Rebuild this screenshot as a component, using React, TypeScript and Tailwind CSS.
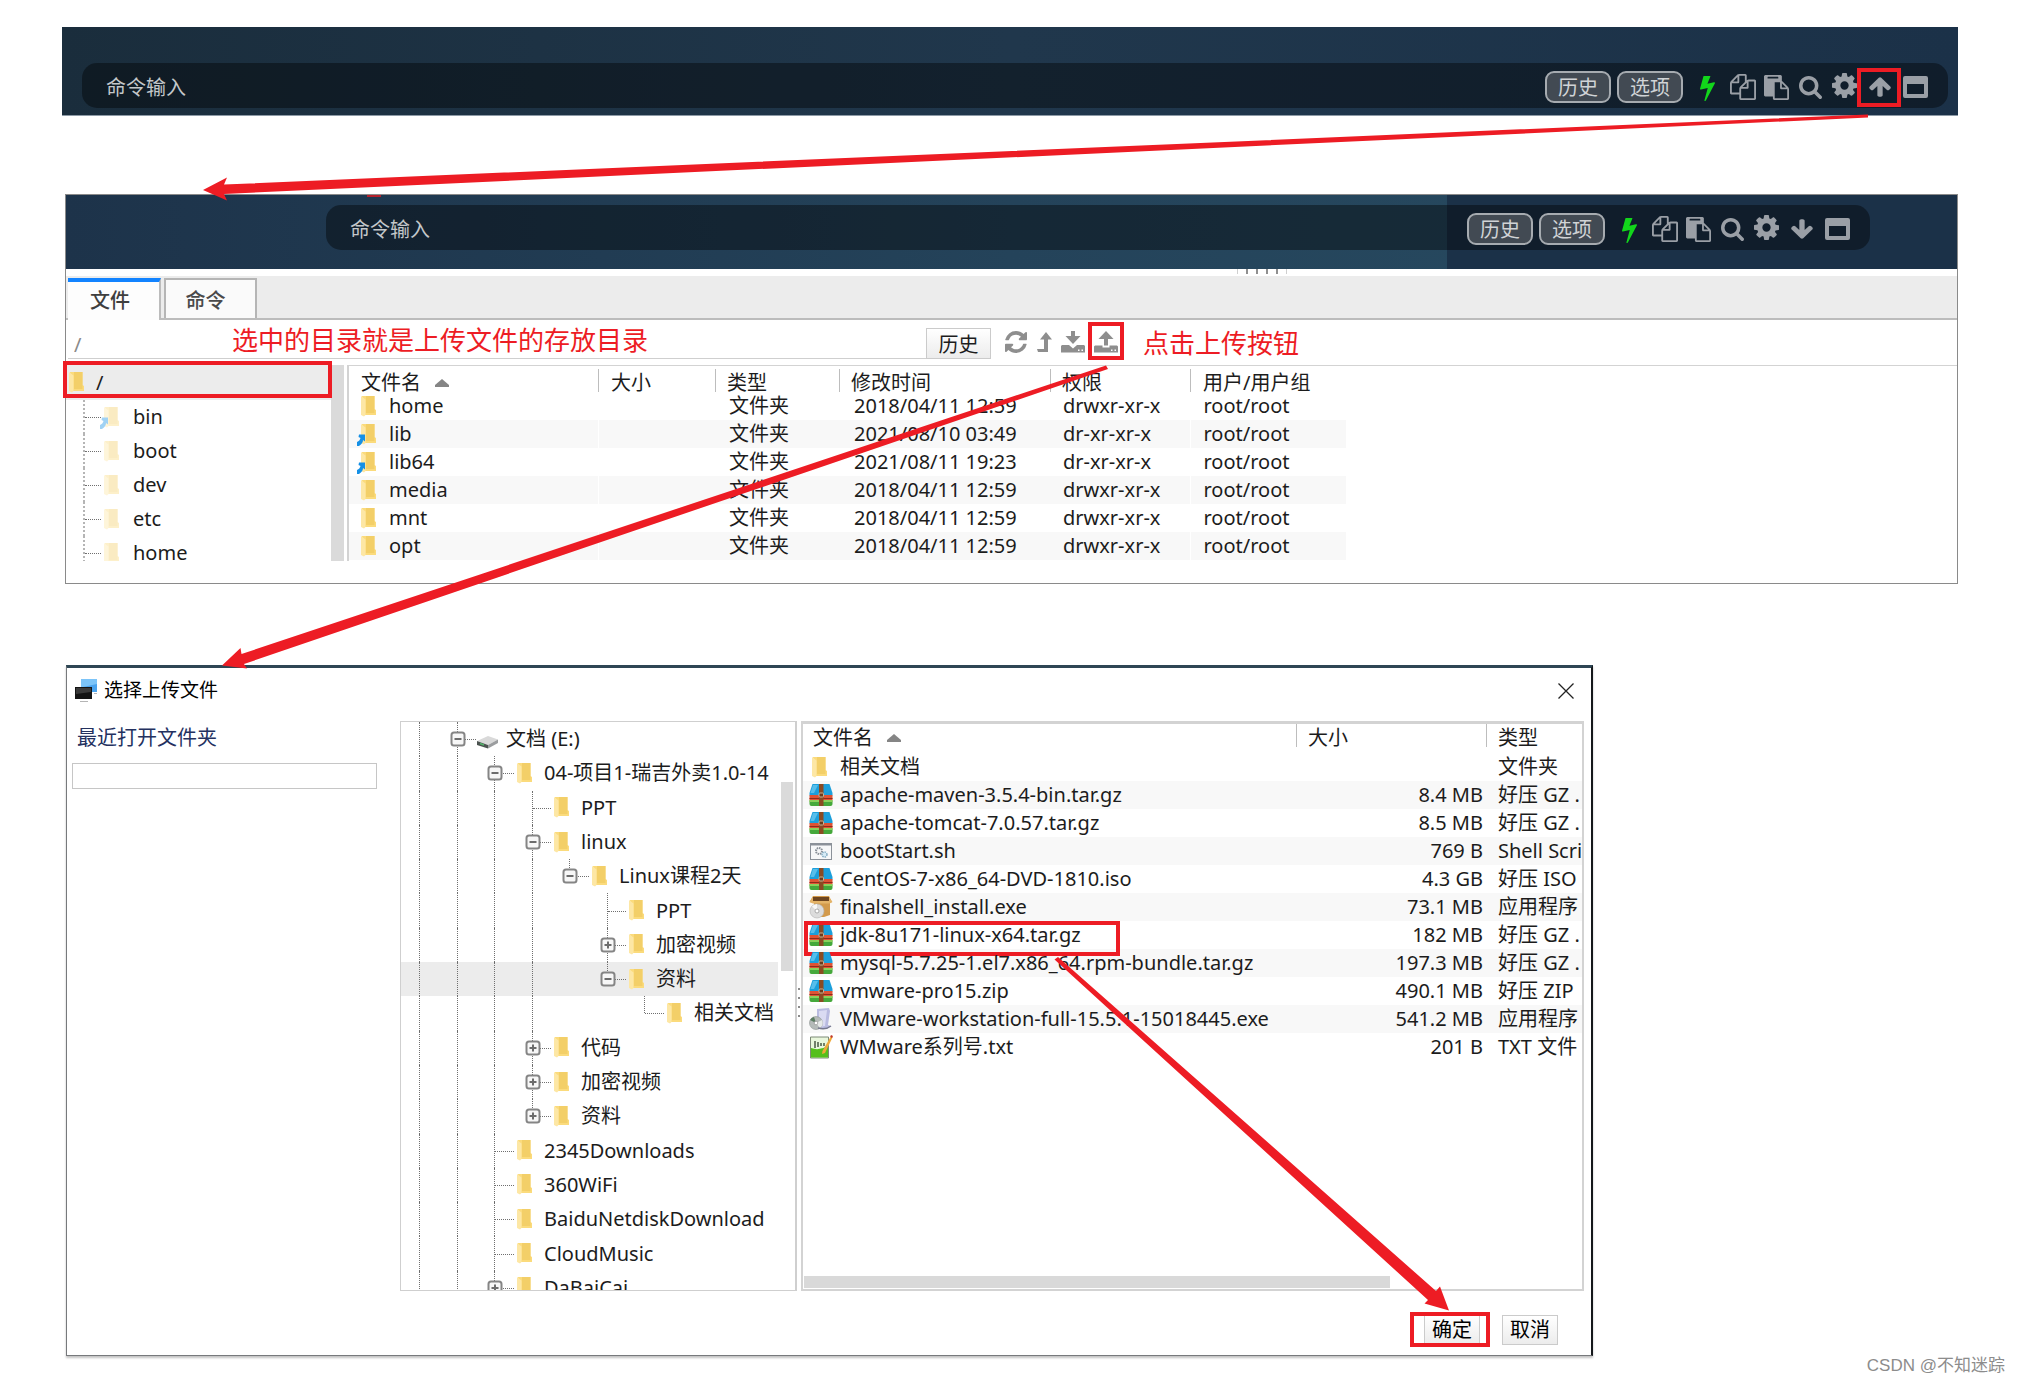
import React from "react";

const FILES_PATH =
  "M1696 384q40 0 68 28t28 68v1216q0 40-28 68t-68 28h-960q-40 0-68-28t-28-68v-288h-544q-40 0-68-28t-28-68v-672q0-40 20-88t48-76l408-408q28-28 76-48t88-20h416q40 0 68 28t28 68v328q68-40 128-40h416zm-544 213l-299 299h299v-299zm-640-384l-299 299h299v-299zm196 647l316-316v-416h-384v416q0 40-28 68t-68 28h-416v640h512v-256q0-40 20-88t48-76zm956 804v-1152h-384v416q0 40-28 68t-68 28h-416v640h896z";
const PASTE_PATH =
  "M768 1664h896v-640h-416q-40 0-68-28t-28-68v-416h-384v1152zm256-1440v-64q0-13-9.5-22.5t-22.5-9.5h-704q-13 0-22.5 9.5t-9.5 22.5v64q0 13 9.5 22.5t22.5 9.5h704q13 0 22.5-9.5t9.5-22.5zm256 672h299l-299-299v299zm512 128v672q0 40-28 68t-68 28h-960q-40 0-68-28t-28-68v-160h-544q-40 0-68-28t-28-68v-1344q0-40 28-68t68-28h1088q40 0 68 28t28 68v328q21 13 36 28l408 408q28 28 48 76t20 88z";
const SEARCH_PATH =
  "M1216 832q0-185-131.5-316.5t-316.5-131.5-316.5 131.5-131.5 316.5 131.5 316.5 316.5 131.5 316.5-131.5 131.5-316.5zm512 832q0 52-38 90t-90 38q-54 0-90-38l-343-342q-179 124-399 124-143 0-273.5-55.5t-225-150-150-225-55.5-273.5 55.5-273.5 150-225 225-150 273.5-55.5 273.5 55.5 225 150 150 225 55.5 273.5q0 220-124 399l343 343q37 37 37 90z";
const COG_PATH =
  "M1152 896q0-106-75-181t-181-75-181 75-75 181 75 181 181 75 181-75 75-181zm512-109v222q0 12-8 23t-20 13l-185 28q-19 54-39 91 35 50 107 138 10 12 10 25t-9 23q-27 37-99 108t-94 71q-12 0-26-9l-138-108q-44 23-91 38-16 136-29 186-7 28-36 28h-222q-14 0-24.5-8.5t-11.5-21.5l-28-184q-49-16-90-37l-141 107q-10 9-25 9-14 0-25-11-126-114-165-168-7-10-7-23 0-12 8-23 15-21 51-66.5t54-70.5q-27-50-41-99l-183-27q-13-2-21-12.5t-8-23.5v-222q0-12 8-23t19-13l186-28q14-46 39-92-40-57-107-138-10-12-10-24 0-10 9-23 26-36 98.5-107.5t94.5-71.5q13 0 26 10l138 107q44-23 91-38 16-136 29-186 7-28 36-28h222q14 0 24.5 8.5t11.5 21.5l28 184q49 16 90 37l142-107q9-9 24-9 13 0 25 10 129 119 165 170 7 8 7 22 0 12-8 23-15 21-51 66.5t-54 70.5q26 50 41 98l183 28q13 2 21 12.5t8 23.5z";
const UP_PATH =
  "M1675 971q0 51-37 90l-75 75q-38 38-91 38-54 0-90-38l-294-293v704q0 52-37.5 84.5t-90.5 32.5h-128q-53 0-90.5-32.5t-37.5-84.5v-704l-294 293q-36 38-90 38t-90-38l-75-75q-38-38-38-90 0-53 38-91l651-651q35-37 90-37 54 0 91 37l651 651q37 39 37 91z";
const BOLT_PATH =
  "M1333 566q18 20 7 44l-540 1157q-13 25-42 25-4 0-14-2-17-5-25.5-19t-4.5-30l197-808-406 101q-4 1-12 1-18 0-31-11-18-15-13-39l201-825q4-14 16-23t28-9h328q19 0 32 12.5t13 29.5q0 8-5 18l-171 463 396-98q8-2 12-2 19 0 34 15z";
const REFRESH_PATH =
  "M1639 1056q0 5-1 7-64 268-268 434.5t-478 166.5q-146 0-282.5-55t-243.5-157l-129 129q-19 19-45 19t-45-19-19-45v-448q0-26 19-45t45-19h448q26 0 45 19t19 45-19 45l-137 137q71 66 161 102t187 36q134 0 250-65t186-179q11-17 53-117 8-23 30-23h192q13 0 22.5 9.5t9.5 22.5zm25-800v448q0 26-19 45t-45 19h-448q-26 0-45-19t-19-45 19-45l138-138q-148-137-349-137-134 0-250 65t-186 179q-11 17-53 117-8 23-30 23h-199q-13 0-22.5-9.5t-9.5-22.5v-7q65-268 270-434.5t480-166.5q146 0 284 55.5t245 156.5l130-129q19-19 45-19t45 19 19 45z";

function Glyph({ d, className, box = "0 0 1792 1792" }: { d: string; className: string; box?: string }) {
  return (
    <svg viewBox={box} className={className} fill="currentColor" preserveAspectRatio="none" aria-hidden="true">
      <path d={d} />
    </svg>
  );
}

function PillButton({ children }: { children: React.ReactNode }) {
  return (
    <button className="flex h-8 w-[66px] items-center justify-center rounded-[9px] border-2 border-[#a6abb0] bg-[#424a53] pt-[2px] text-[20px] leading-none text-[#d0d3d6]">
      {children}
    </button>
  );
}

function CommandBar({ id, dir }: { id: string; dir: "up" | "down" }) {
  return (
    <div className="flex h-[45px] items-center rounded-[15px] bg-black/40 pl-6 pr-5 pt-[3px]">
      <input
        id={id}
        aria-label="命令输入"
        placeholder="命令输入"
        className="min-w-0 flex-1 bg-transparent text-[20px] leading-none outline-none placeholder:text-[#c3c7ca] placeholder:opacity-100"
      />
      <div className="flex shrink-0 items-center text-[#9a9fa6]">
        <div className="flex gap-[6px]">
          <PillButton>历史</PillButton>
          <PillButton>选项</PillButton>
        </div>
        <button aria-label="快速连接" className="ml-[17px] text-[#12d61b]">
          <Glyph d={BOLT_PATH} box="448 0 896 1792" className="h-[27px] w-[15px]" />
        </button>
        <button aria-label="复制" className="ml-[15px]">
          <Glyph d={FILES_PATH} className="size-[26px]" />
        </button>
        <button aria-label="粘贴" className="ml-2">
          <Glyph d={PASTE_PATH} className="size-[25px]" />
        </button>
        <button aria-label="搜索" className="ml-[10px]">
          <Glyph d={SEARCH_PATH} box="64 128 1664 1664" className="size-[23px]" />
        </button>
        <button aria-label="设置" className="ml-[10px] mb-[3px]">
          <Glyph d={COG_PATH} box="128 128 1536 1536" className="size-[25px]" />
        </button>
        <button aria-label={dir === "up" ? "展开" : "收起"} className="relative ml-3">
          <Glyph
            d={UP_PATH}
            box="100 170 1590 1510"
            className={dir === "up" ? "h-5 w-[22px]" : "h-5 w-[22px] rotate-180"}
          />
          {dir === "up" && (
            <span className="absolute -left-[12px] -top-[9px] h-[39px] w-[44px] border-4 border-[#ed1c24]" />
          )}
        </button>
        <button aria-label="窗口" className="ml-3">
          <svg viewBox="0 0 25 22" className="h-[22px] w-[25px]" aria-hidden="true">
            <path
              fill="currentColor"
              fillRule="evenodd"
              d="M2 0h21a2 2 0 0 1 2 2v18a2 2 0 0 1-2 2H2a2 2 0 0 1-2-2V2a2 2 0 0 1 2-2zM4 8v10h17V8z"
            />
          </svg>
        </button>
      </div>
    </div>
  );
}

function Folder({ link = false, faded = false }: { link?: boolean; faded?: boolean }) {
  return (
    <svg viewBox="-3 0 19 23" className="h-[23px] w-[19px] shrink-0 overflow-visible" aria-hidden="true">
      <g opacity={faded ? 0.4 : 1}>
        <path d="M1 1h12.500v13l1.500 1v5H3z" fill="#fbdb7c" />
        <path d="M5 1h8.500v17H5z" fill="#f3cf68" />
        <path d="M0 1l4.500 3.500V20L3 21.500 0 20z" fill="#fde7a5" />
        {link && <path d="M-2 11.500h6v7l-2-1.500c0 2-1 4-4 6h-2v-4c2-1 3-2 3.500-4L-2.500 14z" fill="#1590e6" />}
      </g>
    </svg>
  );
}

function Drive() {
  return (
    <svg viewBox="0 0 24 20" className="h-5 w-6 shrink-0" aria-hidden="true">
      <path d="M1 12L12 7l10 3.500-10 5.500z" fill="#d9d9d9" />
      <path d="M1 12l11 4v3.500L1 16z" fill="#4c5350" />
      <path d="M12 16l10-5.500V14l-10 5.500z" fill="#9b9d9f" />
      <path d="M4 14.500l4 1.500" stroke="#52b36a" strokeWidth="1.500" />
    </svg>
  );
}

function Archive() {
  return (
    <svg viewBox="0 0 24 24" className="h-6 w-6 shrink-0" aria-hidden="true">
      <path d="M3.500 1h17L23.500 10v2.500H.5V10z" fill="#1c9fdb" />
      <path d="M4 2h5L5 10H1.500z" fill="#7fd3f5" opacity=".6" />
      <path d="M.5 12h23v5.500H.5z" fill="#df5334" />
      <path d="M.5 15h23v1H.5z" fill="#8d2c1c" />
      <path d="M.5 17.500h23V21q0 2-2 2h-19q-2 0-2-2z" fill="#45a83b" />
      <path d="M.5 17h23v2H.5z" fill="#8ad05b" />
      <path d="M10 1h4.500v22H10z" fill="#8a4b23" />
      <rect x="10" y="10" width="4.500" height="4" rx="1" fill="#6b3a1c" stroke="#c9b595" strokeWidth="1" />
    </svg>
  );
}

function Script() {
  return (
    <svg viewBox="0 0 24 24" className="h-6 w-6 shrink-0" aria-hidden="true">
      <rect x="1.500" y="4.500" width="21" height="16" fill="#f7f8f9" stroke="#8b9199" />
      <path d="M1 4h22v2.500H1z" fill="#8b9199" />
      <circle cx="10" cy="12" r="3" fill="none" stroke="#8a9199" strokeWidth="2" strokeDasharray="1.500 .8" />
      <circle cx="15.500" cy="15.500" r="2.500" fill="#d7ecf7" stroke="#86aec4" strokeWidth="1.500" strokeDasharray="1.500 .8" />
    </svg>
  );
}

function BoxDisc() {
  return (
    <svg viewBox="0 0 24 24" className="h-6 w-6 shrink-0" aria-hidden="true">
      <path d="M4 1h16l3 6-2 1v12l-6 2H5V8L.5 7z" fill="#d39a4b" />
      <path d="M4 2h16v4H4z" fill="#6d4520" />
      <path d="M.5 7L4 2v4h16V2l3.500 5-3 1.500H4z" fill="#e4b469" />
      <circle cx="8" cy="16" r="7" fill="#dcdcdc" stroke="#b2b2b2" strokeWidth=".6" />
      <path d="M8 16L3 11.500A7 7 0 0 1 8 9z" fill="#f8f8f8" />
      <circle cx="8" cy="16" r="2" fill="#fff" stroke="#999" strokeWidth=".8" />
    </svg>
  );
}

function Installer() {
  return (
    <svg viewBox="0 0 24 24" className="h-6 w-6 shrink-0" aria-hidden="true">
      <path d="M8 2l12-1 1 3-2 14 3 1-4 3H8z" fill="#b9bbe0" />
      <path d="M10 4l8-1-2 16-6 1z" fill="#dadbf2" />
      <circle cx="7" cy="16" r="6.500" fill="#b5bbb9" stroke="#8c9290" strokeWidth=".6" />
      <path d="M7 16L1 13a6.500 6.500 0 0 1 4-3z" fill="#5c7d62" />
      <path d="M7 16l6-3a6.500 6.500 0 0 1-2 8z" fill="#e6e9e8" />
      <circle cx="7" cy="16" r="1.800" fill="#fff" stroke="#888" strokeWidth=".6" />
      <path d="M9 21q8 2 13-2" stroke="#77798f" strokeWidth="1.500" fill="none" />
    </svg>
  );
}

function TextDoc() {
  return (
    <svg viewBox="0 0 24 24" className="h-6 w-6 shrink-0" aria-hidden="true">
      <path d="M1.500 2h18v21h-18z" fill="#e9f7dc" stroke="#7d8a76" />
      <path d="M2 13q8 3 17-2v11.500H2z" fill="#55bf1c" />
      <path d="M6 6v7M9 7v5M12 8v3M15 8v3" stroke="#4a5a44" strokeWidth="1.500" />
      <path d="M22 1l1.500 1.500L16 18l-3 1 .5-3z" fill="#f0a93a" />
      <path d="M21 1l2-1 1 2-1.500 1z" fill="#c0392b" />
    </svg>
  );
}

function SortMark() {
  return (
    <svg viewBox="0 0 14 8" className="h-2 w-[14px]" aria-hidden="true">
      <path d="M7 0l7 6v2H0V6z" fill="#858585" />
    </svg>
  );
}

function HeadCell({ label, first = false, sorted = false, pad }: { label: string; first?: boolean; sorted?: boolean; pad: string }) {
  return (
    <th scope="col" className="p-0 text-left font-normal">
      <div className={`flex h-[23px] items-center gap-[14px] whitespace-nowrap leading-none ${pad} ${first ? "" : "border-l border-[#bdbdbd]"}`}>
        {label}
        {sorted && <SortMark />}
      </div>
    </th>
  );
}

const REMOTE = [
  { name: "home", link: false, date: "2018/04/11 12:59", perm: "drwxr-xr-x" },
  { name: "lib", link: true, date: "2021/08/10 03:49", perm: "dr-xr-xr-x" },
  { name: "lib64", link: true, date: "2021/08/11 19:23", perm: "dr-xr-xr-x" },
  { name: "media", link: false, date: "2018/04/11 12:59", perm: "drwxr-xr-x" },
  { name: "mnt", link: false, date: "2018/04/11 12:59", perm: "drwxr-xr-x" },
  { name: "opt", link: false, date: "2018/04/11 12:59", perm: "drwxr-xr-x" },
];

function RemoteTable() {
  return (
    <table className="w-[997px] table-fixed border-collapse">
      <colgroup>
        <col className="w-[249px]" />
        <col className="w-[117px]" />
        <col className="w-[124px]" />
        <col className="w-[211px]" />
        <col className="w-[140px]" />
        <col className="w-[156px]" />
      </colgroup>
      <thead>
        <tr className="h-[26px] align-bottom">
          <HeadCell label="文件名" first sorted pad="pl-3 pt-1" />
          <HeadCell label="大小" pad="pl-3 pt-1" />
          <HeadCell label="类型" pad="pl-[11px] pt-1" />
          <HeadCell label="修改时间" pad="pl-[11px] pt-1" />
          <HeadCell label="权限" pad="pl-[11px] pt-1" />
          <HeadCell label="用户/用户组" pad="pl-3 pt-1" />
        </tr>
      </thead>
      <tbody>
        {REMOTE.map((r) => (
          <tr key={r.name} className="h-7 even:bg-[#f8f8f8]">
            <td className="p-0">
              <div className="flex items-center gap-2 pl-[9px]">
                <Folder link={r.link} />
                <span className="pl-1 leading-7">{r.name}</span>
              </div>
            </td>
            <td className="border-l border-white p-0" />
            <td className="p-0 pl-[14px] leading-7">文件夹</td>
            <td className="p-0 pl-[15px] leading-7">{r.date}</td>
            <td className="p-0 pl-[13px] leading-7">{r.perm}</td>
            <td className="border-l border-white p-0 pl-[13px] leading-7">root/root</td>
          </tr>
        ))}
      </tbody>
    </table>
  );
}

type Guide = "|" | " " | "T" | "L";
type Node = { label: string; cells: string; sign?: "+" | "-"; drive?: boolean; selected?: boolean };

const TREE: Node[] = [
  { label: "文档 (E:)", cells: "|T", sign: "-", drive: true },
  { label: "04-项目1-瑞吉外卖1.0-14", cells: "||T", sign: "-" },
  { label: "PPT", cells: "|||T" },
  { label: "linux", cells: "|||T", sign: "-" },
  { label: "Linux课程2天", cells: "||||L", sign: "-" },
  { label: "PPT", cells: "|||| T" },
  { label: "加密视频", cells: "|||| T", sign: "+" },
  { label: "资料", cells: "|||| L", sign: "-", selected: true },
  { label: "相关文档", cells: "||||  L" },
  { label: "代码", cells: "|||T", sign: "+" },
  { label: "加密视频", cells: "|||T", sign: "+" },
  { label: "资料", cells: "|||L", sign: "+" },
  { label: "2345Downloads", cells: "||T" },
  { label: "360WiFi", cells: "||T" },
  { label: "BaiduNetdiskDownload", cells: "||T" },
  { label: "CloudMusic", cells: "||T" },
  { label: "DaBaiCai", cells: "||T", sign: "+" },
];

function GuideCell({ kind, sign, wide, last }: { kind: Guide; sign?: "+" | "-"; wide: boolean; last: boolean }) {
  return (
    <div className={`relative h-full shrink-0 ${wide ? "w-[38px]" : "w-[37px]"}`}>
      {kind !== " " && (
        <span className={`absolute left-[18px] top-0 border-l border-dotted border-[#6f6f6f] ${kind === "L" ? "h-1/2" : "h-full"}`} />
      )}
      {last && <span className="absolute left-[19px] right-0 top-1/2 border-t border-dotted border-[#6f6f6f]" />}
      {last && sign && (
        <svg viewBox="0 0 16 16" className="absolute left-[11px] top-[9px] size-4" aria-hidden="true">
          <rect x="1.500" y="1.500" width="13" height="13" rx="2.500" fill="#f7f7f7" stroke="#858585" strokeWidth="2" />
          <path d={sign === "+" ? "M4.500 8h7M8 4.500v7" : "M4.500 8h7"} stroke="#6c6c6c" strokeWidth="2" />
        </svg>
      )}
    </div>
  );
}

function LocalTree() {
  return (
    <ul className="grid h-[583px] auto-rows-fr">
      {TREE.map((n, i) => (
        <li key={i} className={`mr-[17px] flex min-h-0 items-center ${n.selected ? "bg-[#ececec]" : ""}`}>
          {n.cells.split("").map((c, k) => (
            <GuideCell key={k} kind={c as Guide} sign={n.sign} wide={k % 2 === 0} last={k === n.cells.length - 1} />
          ))}
          {n.drive ? <Drive /> : <Folder />}
          <span className={`whitespace-nowrap leading-none ${n.drive ? "pl-[6px]" : "pl-[11px]"}`}>{n.label}</span>
        </li>
      ))}
    </ul>
  );
}

const LOCAL = [
  { icon: <Folder />, name: "相关文档", size: "", type: "文件夹" },
  { icon: <Archive />, name: "apache-maven-3.5.4-bin.tar.gz", size: "8.4 MB", type: "好压 GZ ." },
  { icon: <Archive />, name: "apache-tomcat-7.0.57.tar.gz", size: "8.5 MB", type: "好压 GZ ." },
  { icon: <Script />, name: "bootStart.sh", size: "769 B", type: "Shell Scri" },
  { icon: <Archive />, name: "CentOS-7-x86_64-DVD-1810.iso", size: "4.3 GB", type: "好压 ISO" },
  { icon: <BoxDisc />, name: "finalshell_install.exe", size: "73.1 MB", type: "应用程序" },
  { icon: <Archive />, name: "jdk-8u171-linux-x64.tar.gz", size: "182 MB", type: "好压 GZ .", marked: true },
  { icon: <Archive />, name: "mysql-5.7.25-1.el7.x86_64.rpm-bundle.tar.gz", size: "197.3 MB", type: "好压 GZ ." },
  { icon: <Archive />, name: "vmware-pro15.zip", size: "490.1 MB", type: "好压 ZIP" },
  { icon: <Installer />, name: "VMware-workstation-full-15.5.1-15018445.exe", size: "541.2 MB", type: "应用程序" },
  { icon: <TextDoc />, name: "WMware系列号.txt", size: "201 B", type: "TXT 文件" },
];

function LocalTable() {
  return (
    <table className="w-full table-fixed border-collapse">
      <colgroup>
        <col />
        <col className="w-[190px]" />
        <col className="w-[96px]" />
      </colgroup>
      <thead>
        <tr className="h-[29px] align-top">
          <HeadCell label="文件名" first sorted pad="pl-[10px] pt-1" />
          <HeadCell label="大小" pad="pl-[11px] pt-1" />
          <HeadCell label="类型" pad="pl-[11px] pt-1" />
        </tr>
      </thead>
      <tbody>
        {LOCAL.map((r) => (
          <tr key={r.name} className="h-7 even:bg-[#f8f8f8]">
            <td className="relative p-0">
              <div className="flex items-center pl-[6px]">
                <span className="flex w-[31px] shrink-0">{r.icon}</span>
                <span className="whitespace-nowrap leading-7">{r.name}</span>
              </div>
              {r.marked && (
                <span className="absolute left-px top-0 h-[35px] w-[316px] border-4 border-[#ed1c24]" />
              )}
            </td>
            <td className="p-0 pr-[3px] text-right leading-7">{r.size}</td>
            <td className="whitespace-nowrap p-0 pl-3 leading-7">{r.type}</td>
          </tr>
        ))}
      </tbody>
    </table>
  );
}

function Arrows() {
  return (
    <svg className="pointer-events-none absolute left-0 top-0 h-[1383px] w-[2021px]" viewBox="0 0 2021 1383" aria-hidden="true">
      <g fill="#ed1c24">
        <path d="M203 190L227 177.500 224 184.500 1868 114.500V117.500L224 194 227 200.500z" />
        <path d="M222 665.500L240.500 648 241.500 654 1106 365.500 1108 369 244 664 247 668.500z" />
        <path d="M1054.500 959.500L1058 957 1436 1291 1440 1286.500 1449 1310.500 1424.500 1303.500 1428 1300z" />
      </g>
    </svg>
  );
}

export default function App() {
  return (
    <div className="relative overflow-hidden bg-white pb-7 font-['Noto_Sans','Noto_Sans_CJK_SC',sans-serif] text-[20px] text-[#1c1c1c]">
      <header className="ml-[62px] mr-[63px] mt-[27px] border-b border-[#8d9aa6] bg-linear-to-r from-[#1a2d3c] via-[#20374c] to-[#1b3148] pb-[7px] pl-5 pr-[10px] pt-9">
        <CommandBar id="cmd-top" dir="up" />
      </header>

      <main>
        <section className="ml-[65px] mr-[63px] mt-[78px] border border-[#8a8a8a]">
          <div className="relative flex bg-linear-to-r from-[#1d334a] via-[#24435a] to-[#284c62] pb-[19px] pl-[260px] pr-[87px] pt-[10px]">
            <span className="absolute inset-y-0 right-0 w-[510px] bg-[#1b3148]" />
            <span className="absolute left-[301px] top-0 h-[2px] w-[14px] bg-[#b3202c]" />
            <div className="relative flex-1">
              <CommandBar id="cmd-panel" dir="down" />
            </div>
          </div>
          <div className="flex h-[7px] items-center justify-center gap-2 pl-[500px] pb-[2px]">
            <span className="h-[5px] w-px bg-[#cfcfcf]" />
            <span className="h-[5px] w-[2px] bg-[#8f8f8f]" />
            <span className="h-[5px] w-[2px] bg-[#8f8f8f]" />
            <span className="h-[5px] w-[2px] bg-[#8f8f8f]" />
            <span className="h-[5px] w-[2px] bg-[#8f8f8f]" />
            <span className="h-[5px] w-px bg-[#cfcfcf]" />
          </div>
          <div role="tablist" className="flex h-11 items-end gap-[3px] border-b-2 border-[#bcbcbc] bg-[#ececec] pl-[2px]">
            <button role="tab" aria-selected="true" className="-mb-[2px] h-[42px] w-[93px] border-r-2 border-t-4 border-r-[#bcbcbc] border-t-[#1283ff] bg-[#fdfdfd] pr-[7px] text-[20px] font-medium leading-none text-[#3f3f3f]">
              文件
            </button>
            <button role="tab" aria-selected="false" className="h-10 w-[93px] border-2 border-b-0 border-[#b5b5b5] bg-[#fafafa] pr-[10px] pt-1 text-[20px] font-medium leading-none text-[#4a4a4a]">
              命令
            </button>
          </div>

          <div className="relative flex h-[45px] items-start pl-[2px] pt-2">
            <input
              aria-label="路径"
              defaultValue="/"
              className="h-[31px] w-[858px] border-b border-[#cfcfcf] bg-transparent pl-[6px] pt-[2px] text-[20px] leading-none text-[#8a8a8a] outline-none"
            />
            <button className="h-[31px] w-[65px] border border-[#cbcbcb] bg-linear-to-b from-white to-[#ececec] pt-[2px] text-[20px] leading-none">
              历史
            </button>
            <div className="flex items-center pl-[14px] pt-[3px] text-[#8e8e8e]">
              <button aria-label="刷新">
                <Glyph d={REFRESH_PATH} box="128 128 1536 1536" className="size-[22px]" />
              </button>
              <button aria-label="上级目录" className="ml-[10px]">
                <svg viewBox="0 0 15 20" className="h-5 w-[15px]" fill="currentColor" aria-hidden="true">
                  <path d="M9 0l6 7.500h-4V20H1l-1-3h7V7.500H3z" />
                </svg>
              </button>
              <button aria-label="下载" className="ml-[9px]">
                <svg viewBox="0 0 24 22" className="h-[22px] w-6" fill="currentColor" aria-hidden="true">
                  <path d="M10 0h4v5h5.500L12 13 4.500 5H10z" />
                  <path fillRule="evenodd" d="M1 14h7l4 3.500 4-3.500h7l1 1v6.500H0V15zM17 18.500v1.500h1.500v-1.500zM20.500 18.500v1.500h1.500v-1.500z" />
                </svg>
              </button>
              <button aria-label="上传" className="relative ml-[9px]">
                <svg viewBox="0 0 24 22" className="h-[22px] w-6" fill="currentColor" aria-hidden="true">
                  <path d="M10 14.500h4V8h5.500L12 0 4.500 8H10z" />
                  <path fillRule="evenodd" d="M1 14.500h7.500V16.500h7V14.500H23l1 1v6H0v-6zM17 18.500v1.500h1.500v-1.500zM20.500 18.500v1.500h1.500v-1.500z" />
                </svg>
                <span className="absolute -left-[6px] -top-[9px] h-[38px] w-9 border-4 border-[#ed1c24]" />
              </button>
            </div>
            <span className="absolute left-[166px] top-[5px] text-[26px] leading-[30px] text-[#ed1c24]">
              选中的目录就是上传文件的存放目录
            </span>
            <span className="absolute left-[1077px] top-2 text-[26px] leading-[30px] text-[#ed1c24]">
              点击上传按钮
            </span>
          </div>

          <div className="flex pb-[22px]">
            <div className="relative h-[196px] w-[278px] shrink-0">
              <div className="h-full overflow-hidden">
                <div className="flex h-[35px] items-center bg-[#ececec]">
                  <Folder />
                  <span className="pl-[11px] leading-none">/</span>
                </div>
                <ul>
                  {["bin", "boot", "dev", "etc", "home"].map((n) => (
                    <li key={n} className="flex h-[34px] items-center">
                      <span className="relative ml-[17px] h-full w-[18px] border-l-2 border-dotted border-[#b5b5b5]">
                        <span className="absolute left-0 right-0 top-1/2 border-t border-dotted border-[#6f6f6f]" />
                      </span>
                      <Folder faded link={n === "bin"} />
                      <span className="pl-[13px] leading-none">{n}</span>
                    </li>
                  ))}
                </ul>
              </div>
              <span className="absolute right-0 top-0 h-full w-[13px] bg-[#dadada]" />
              <span className="absolute -left-[3px] -top-1 h-[37px] w-[269px] border-4 border-[#ed1c24]" />
            </div>
            <div className="ml-[3px] h-[196px] flex-1 overflow-hidden border-l-2 border-t border-[#d3d3d3]">
              <RemoteTable />
            </div>
          </div>
        </section>

        <section
          role="dialog"
          aria-labelledby="upload-title"
          className="ml-[66px] mt-[81px] max-w-[1527px] border border-r-2 border-t-[3px] border-[#77797c] border-r-[#15181b] border-t-[#2e4654] shadow-[0_2px_2px_#c4c4c4]"
        >
          <div className="flex h-[53px] items-center pb-2 pl-2 pr-[17px]">
            <svg viewBox="0 0 23 24" className="h-6 w-[23px]" aria-hidden="true">
              <path d="M6 0h16v13H6z" fill="#4aa3ee" />
              <path d="M6 0h16v5L8 8H6z" fill="#7cc4f8" />
              <path d="M0 8h17v12H0z" fill="#141414" />
              <path d="M1 9h15v4L1 15z" fill="#3a3a3a" />
              <path d="M19 14h3v1h-3zM5 22h8v1H5z" fill="#b5b5b5" />
            </svg>
            <h1 id="upload-title" className="flex-1 pl-[6px] text-[19px] leading-none text-black">
              选择上传文件
            </h1>
            <button aria-label="关闭">
              <svg viewBox="0 0 16 16" className="size-4" aria-hidden="true">
                <path d="M.5.5l15 15M15.500.5l-15 15" stroke="#222" strokeWidth="1.300" />
              </svg>
            </button>
          </div>
          <div className="flex pr-[7px]">
            <div className="w-[333px] shrink-0 pl-[5px] pt-[5px]">
              <label htmlFor="recent" className="block pl-[5px] leading-6 text-[#24315f]">
                最近打开文件夹
              </label>
              <input id="recent" className="mt-[13px] h-[26px] w-[305px] border border-[#c6c6c6] px-1 text-[20px] outline-none" />
            </div>
            <div className="relative h-[570px] w-[397px] shrink-0 overflow-hidden border border-r-2 border-[#cfcfcf]">
              <LocalTree />
              <span className="absolute right-[2px] top-[60px] h-[189px] w-3 bg-[#dadada]" />
            </div>
            <div className="flex w-[4px] flex-col items-center justify-center gap-[7px] pb-2">
              <span className="size-[2px] bg-[#8a8a8a]" />
              <span className="size-[2px] bg-[#8a8a8a]" />
              <span className="size-[2px] bg-[#8a8a8a]" />
              <span className="size-[2px] bg-[#8a8a8a]" />
            </div>
            <div className="relative h-[570px] flex-1 overflow-hidden border-2 border-t-[3px] border-[#d3d3d3]">
              <LocalTable />
              <span className="absolute bottom-px left-px h-3 w-[586px] bg-[#d9d9d9]" />
            </div>
          </div>
          <div className="flex justify-end gap-[22px] pb-[10px] pr-[33px] pt-6">
            <button className="relative h-[30px] w-[56px] border border-[#cbcbcb] bg-linear-to-b from-white to-[#ececec] text-[20px] leading-none text-black">
              确定
              <span className="absolute -left-[15px] -top-1 h-[35px] w-[80px] border-4 border-[#ed1c24]" />
            </button>
            <button className="h-[30px] w-[56px] border border-[#cbcbcb] bg-linear-to-b from-white to-[#ececec] text-[20px] leading-none text-black">
              取消
            </button>
          </div>
        </section>
      </main>

      <Arrows />
      <footer className="absolute bottom-2 right-4 font-['Liberation_Sans','Noto_Sans_CJK_SC',sans-serif] text-[17px] leading-5 text-[#8c8c8c]">
        CSDN @不知迷踪
      </footer>
    </div>
  );
}
